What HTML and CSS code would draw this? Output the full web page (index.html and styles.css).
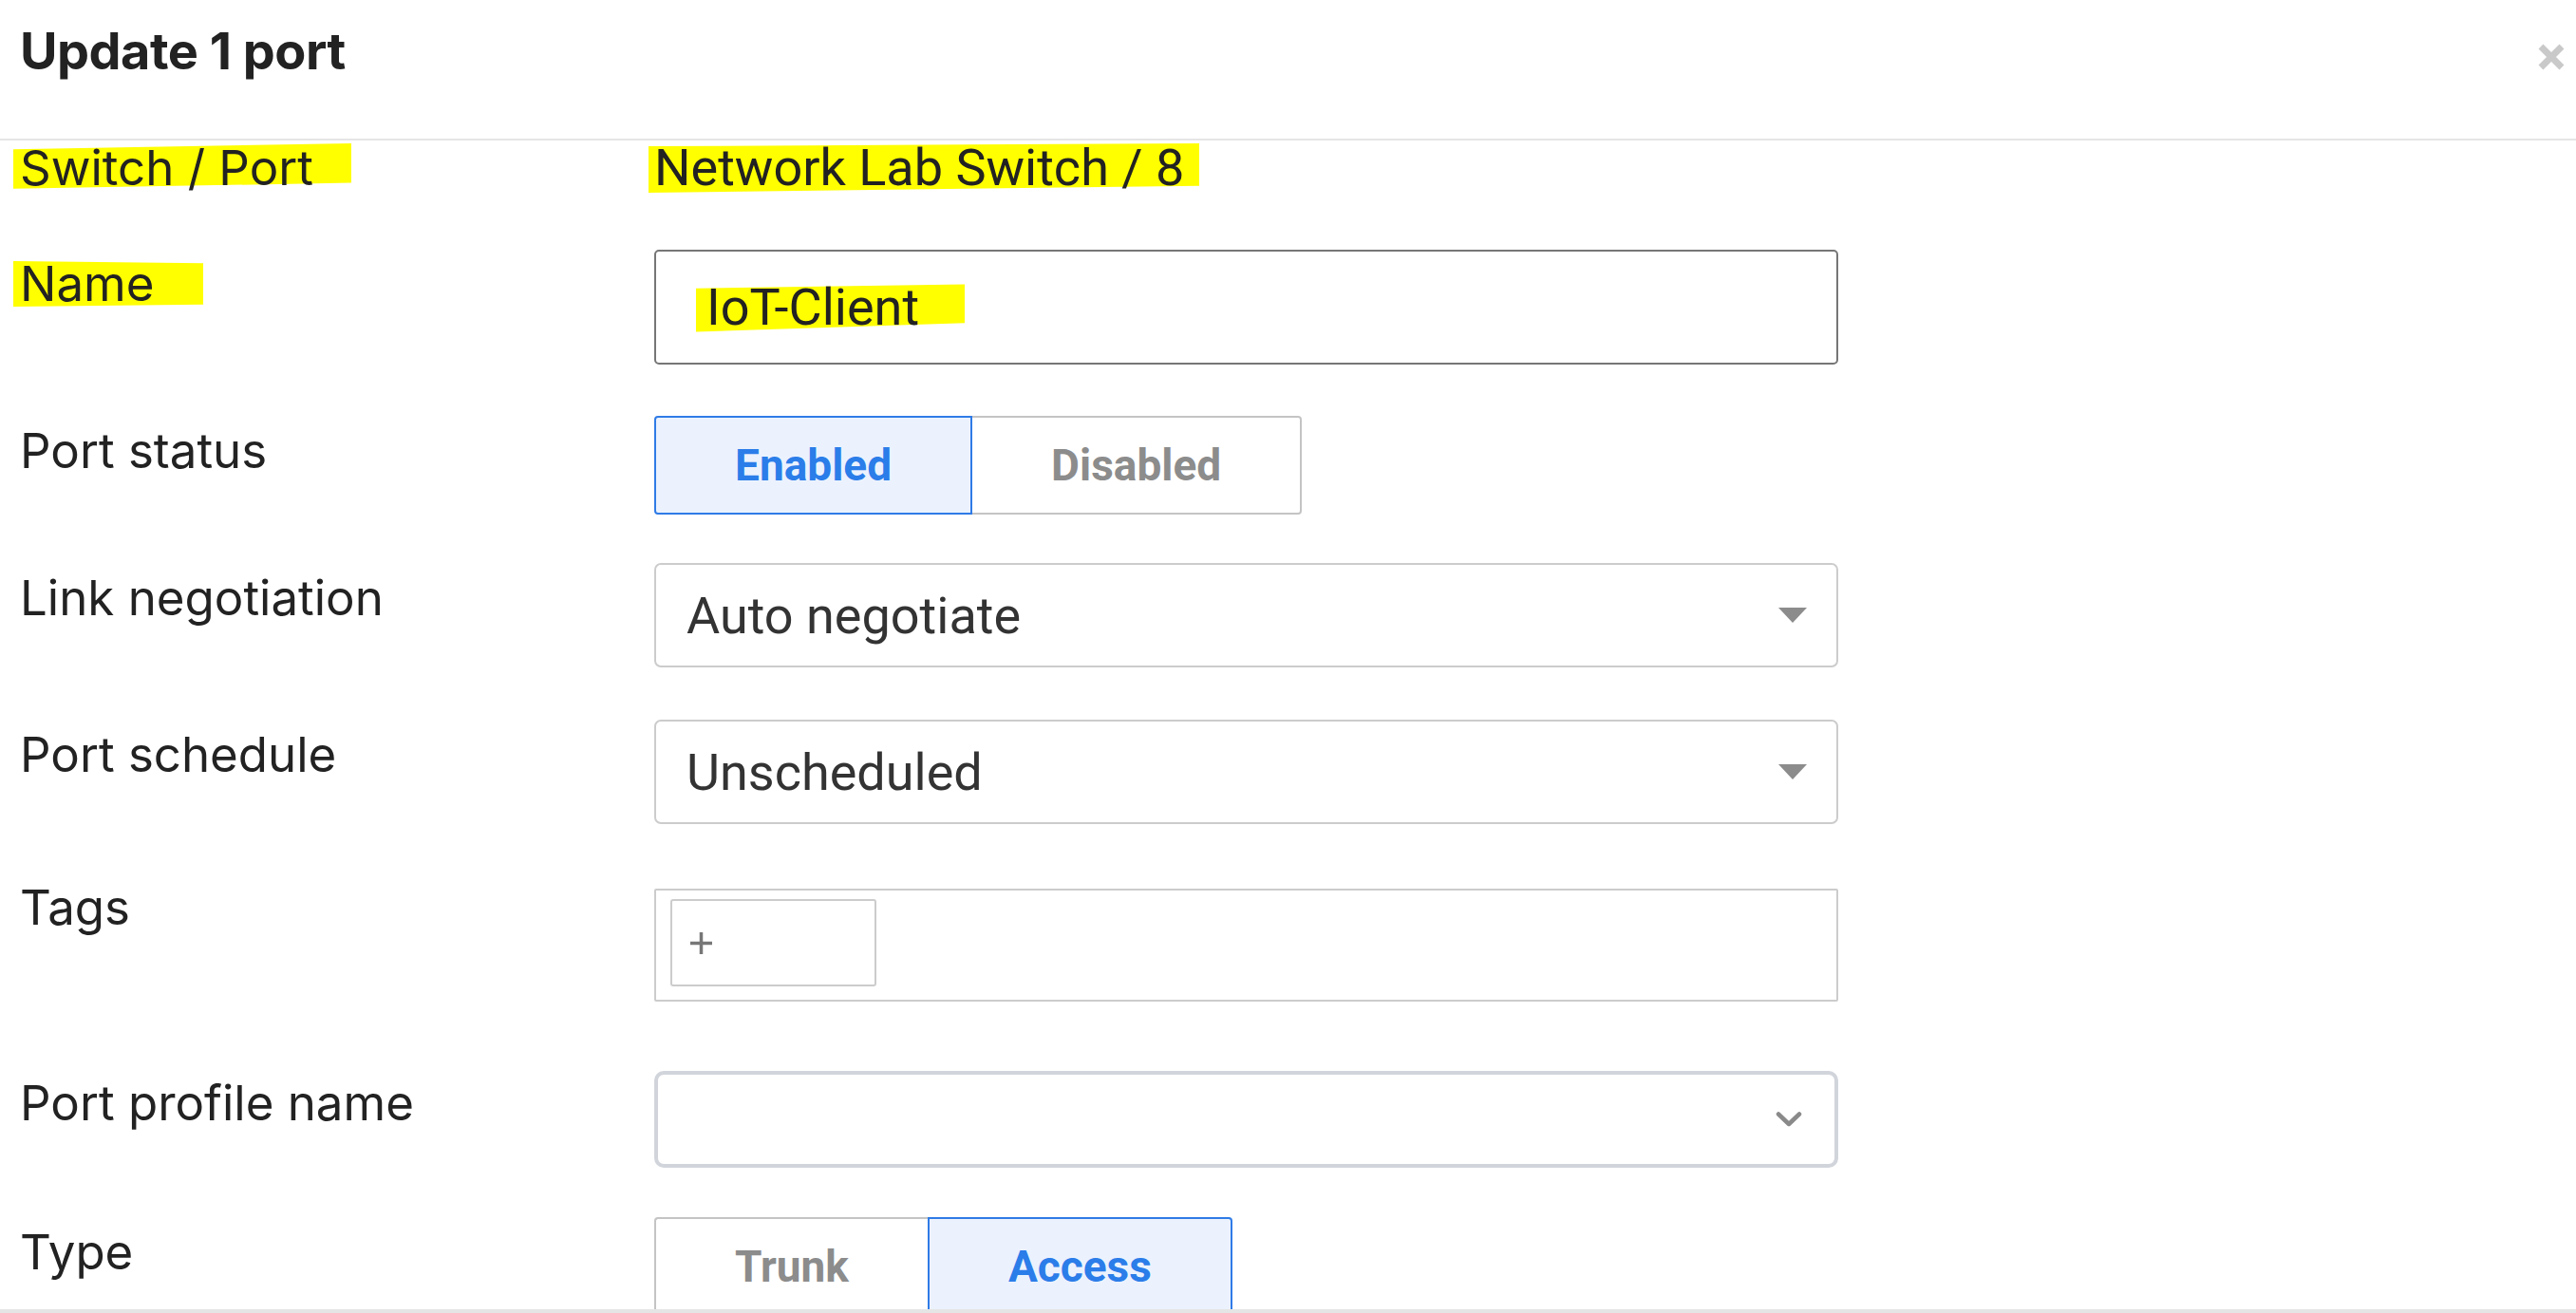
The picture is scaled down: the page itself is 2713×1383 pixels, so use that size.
FILE: index.html
```html
<!DOCTYPE html>
<html lang="en">
<head>
<meta charset="utf-8">
<title>Update 1 port</title>
<link rel="stylesheet" href="styles.css">
</head>
<body>
<div class="modal">
  <header class="header">
    <h1 class="title">Update 1 port</h1>
    <button class="close" aria-label="Close">
      <svg viewBox="0 0 30 30" width="30" height="30"><path d="M4 4L26 26M26 4L4 26" stroke="#c9c9c9" stroke-width="7" fill="none"/></svg>
    </button>
  </header>
  <main class="body">
    <div class="row row-switch">
      <div class="label label-first"><span class="hl hl-switch">Switch / Port</span></div>
      <div class="value"><span class="hl hl-net">Network Lab Switch / 8</span></div>
    </div>

    <div class="row row-name">
      <div class="label label-name"><span class="hl hl-name">Name</span></div>
      <div class="input"><span class="hl hl-iot">IoT-Client</span></div>
    </div>

    <div class="row row-status">
      <div class="label label-status">Port status</div>
      <div class="seg">
        <div class="seg-btn seg-left active">Enabled</div>
        <div class="seg-btn seg-right no-left">Disabled</div>
      </div>
    </div>

    <div class="row row-link">
      <div class="label">Link negotiation</div>
      <div class="select"><span>Auto negotiate</span><span class="caret"></span></div>
    </div>

    <div class="row row-schedule">
      <div class="label">Port schedule</div>
      <div class="select"><span>Unscheduled</span><span class="caret"></span></div>
    </div>

    <div class="row row-tags">
      <div class="label label-tags">Tags</div>
      <div class="tags">
        <div class="tag-add" aria-label="Add tag">
          <svg viewBox="0 0 25 25" width="25" height="25"><path d="M12.5 1V24M1 12.5H24" stroke="#777" stroke-width="3.5" fill="none"/></svg>
        </div>
      </div>
    </div>

    <div class="row row-profile">
      <div class="label label-profile">Port profile name</div>
      <div class="select-profile">
        <svg class="chevron" viewBox="0 0 28 18" width="28" height="18"><path d="M3 3.5L14 14L25 3.5" stroke="#8a8a8a" stroke-width="4.5" fill="none" stroke-linecap="round" stroke-linejoin="round"/></svg>
      </div>
    </div>

    <div class="row row-type">
      <div class="label">Type</div>
      <div class="seg">
        <div class="seg-btn seg-left no-right">Trunk</div>
        <div class="seg-btn seg-right active">Access</div>
      </div>
    </div>
  </main>
  <footer class="footer"></footer>
</div>
</body>
</html>
```

FILE: styles.css
```css
* { box-sizing: border-box; }
html, body { margin: 0; padding: 0; }
body {
  width: 2713px;
  height: 1383px;
  overflow: hidden;
  background: #fff;
  color: #222;
  font-family: Inter, "Noto Sans", sans-serif;
}
.modal {
  display: flex;
  flex-direction: column;
  height: 1383px;
  overflow: hidden;
}
.header {
  flex: none;
  height: 148px;
  border-bottom: 2px solid #e5e5e5;
  display: flex;
  justify-content: space-between;
  align-items: flex-start;
  padding: 0 11px 0 21px;
}
.title {
  margin: 0;
  padding-top: 22px;
  font-family: Inter, sans-serif;
  font-weight: 700;
  font-size: 54px;
  line-height: 64px;
  letter-spacing: -0.5px;
  color: #222;
}
.close {
  margin-top: 45px;
  padding: 0;
  border: 0;
  background: none;
  width: 30px;
  height: 30px;
  display: block;
}
.close svg { display: block; }
.body {
  flex: 1 1 0;
  min-height: 0;
  padding-left: 21px;
}
.footer {
  flex: none;
  position: relative;
  z-index: 1;
  height: 4px;
  background: #e5e5e5;
}

.row {
  display: grid;
  grid-template-columns: 668px 1247px;
  align-items: start;
}
.row-switch { margin-top: -3px; margin-bottom: 54px; }
.row-name { margin-bottom: 54px; }
.row-status { margin-bottom: 51px; }
.row-link { margin-bottom: 55px; }
.row-schedule { margin-bottom: 68px; }
.row-tags { margin-bottom: 73px; }
.row-profile { margin-bottom: 52px; }

.label {
  font-size: 51px;
  line-height: 64px;
  color: #222;
  padding-top: 5px;
}
.label-first { padding-top: 0; }
.label-name { padding-top: 4px; }
.label-status { padding-top: 5px; }
.label-tags { padding-top: 0; margin-top: -12px; }
.label-profile { padding-top: 2px; }

.value {
  font-family: Roboto, "Liberation Sans", sans-serif;
  font-size: 54px;
  line-height: 64px;
  color: #222;
}

/* marker highlights: the yellow stroke is drawn behind the text */
.hl {
  display: inline-block;
  position: relative;
  z-index: 0;
  line-height: 64px;
}
.hl::before {
  content: "";
  position: absolute;
  left: 0;
  right: 0;
  top: 6px;
  bottom: 6px;
  z-index: -1;
  background: #ffff00;
}
.hl-switch {
  margin-left: -7px;
  padding: 0 40px 0 7px;
}
.hl-switch::before { clip-path: polygon(0 12%, 100% 0, 100% 80%, 0 92%); }
.hl-name {
  margin-left: -7px;
  padding: 0 52px 0 7px;
}
.hl-name::before { clip-path: polygon(0 4%, 100% 8%, 100% 92%, 0 96%); }
.hl-net {
  margin-left: -6px;
  padding: 0 16px 0 6px;
}
.hl-net::before { clip-path: polygon(0 6%, 100% 0, 100% 86%, 0 100%); }
.hl-iot {
  padding: 0 48px 0 11px;
}
.hl-iot::before { clip-path: polygon(0 12%, 100% 4%, 100% 82%, 0 100%); }

.input {
  height: 121px;
  border: 2px solid #767676;
  border-radius: 5px;
  display: flex;
  align-items: center;
  padding-left: 42px;
  font-family: Roboto, "Liberation Sans", sans-serif;
  font-size: 54px;
  color: #222;
}

.seg {
  display: flex;
  height: 104px;
}
.seg-btn {
  display: flex;
  align-items: center;
  justify-content: center;
  padding: 0 83px;
  border: 2px solid #c4c4c4;
  background: #fff;
  color: #8c8c8c;
  font-family: Roboto, "Liberation Sans", sans-serif;
  font-weight: 700;
  font-size: 46px;
}
.seg-left { border-radius: 4px 0 0 4px; }
.seg-right { border-radius: 0 4px 4px 0; }
.no-left { border-left: 0; }
.no-right { border-right: 0; }
.seg-btn.active {
  border-color: #2f7be6;
  background: #ebf2fe;
  color: #2b7de9;
}

.select {
  height: 110px;
  border: 2px solid #cccccc;
  border-radius: 7px;
  display: flex;
  align-items: center;
  justify-content: space-between;
  padding: 0 31px 0 32px;
  font-family: Roboto, "Liberation Sans", sans-serif;
  font-size: 54px;
  color: #333;
}
.caret {
  width: 0;
  height: 0;
  border-left: 15px solid transparent;
  border-right: 15px solid transparent;
  border-top: 16px solid #8c8c8c;
}

.tags {
  height: 119px;
  border: 2px solid #cccccc;
  border-radius: 2px;
  padding: 9px 15px;
}
.tag-add {
  width: 217px;
  height: 92px;
  border: 2px solid #cccccc;
  border-radius: 3px;
  display: flex;
  align-items: center;
  padding-left: 18px;
}
.tag-add svg { display: block; }

.select-profile {
  height: 102px;
  border: 4px solid #d1d5db;
  border-radius: 10px;
  display: flex;
  align-items: center;
  justify-content: flex-end;
  padding-right: 34px;
}
.chevron { display: block; }
```
